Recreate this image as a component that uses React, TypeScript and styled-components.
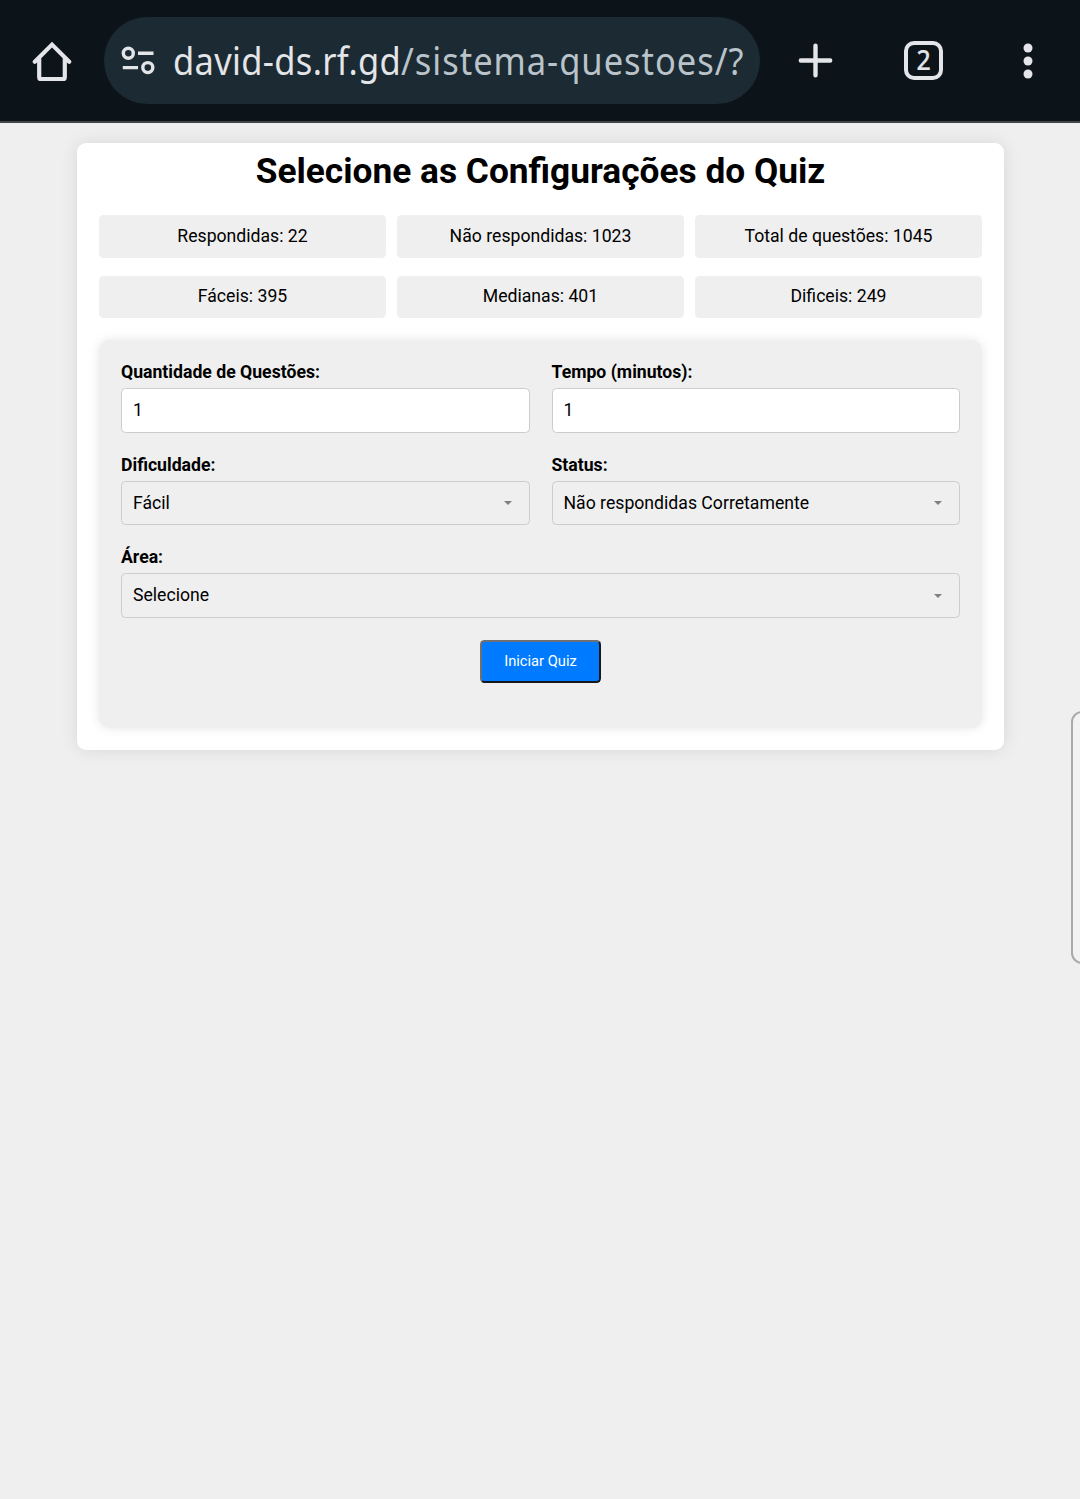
import React from "react";
import styled, { createGlobalStyle } from "styled-components";

const GlobalStyle = createGlobalStyle`
  * { box-sizing: border-box; }
  body {
    margin: 0;
    background: #efefef;
    color: #000;
    font: 17.65px/20.5px Roboto, sans-serif;
  }
`;

const Page = styled.div`
  position: relative;
  min-height: 1499px;
  overflow: hidden;
`;

const BrowserBar = styled.header`
  display: flex;
  align-items: center;
  height: 123px;
  padding: 0 32px 2px;
  background: #0c141a;
  box-shadow: inset 0 -2px #42474c;
`;

const HomeIcon = styled.svg`
  width: 40px;
  height: 40px;
  margin-right: 32px;
  flex: none;
`;

const AddressBar = styled.div`
  display: flex;
  align-items: center;
  width: 656px;
  height: 87px;
  padding-left: 17px;
  border-radius: 44px;
  background: #1b2a33;
`;

const SiteIcon = styled.svg`
  width: 34px;
  height: 30px;
  margin-right: 18px;
  flex: none;
`;

const Url = styled.div`
  width: 576px;
  padding-top: 1px;
  font: 37.5px/54px "Noto Sans", sans-serif;
  white-space: nowrap;
  color: #b9c3c9;
  letter-spacing: 1.05px;
  transform: scaleX(0.92);
  transform-origin: left center;
`;

const Host = styled.span`
  color: #e3e5e8;
  letter-spacing: 0.36px;
`;

const PlusIcon = styled.svg`
  width: 35px;
  height: 35px;
  margin-left: 38px;
  flex: none;
`;

const TabCount = styled.div`
  display: flex;
  align-items: center;
  justify-content: center;
  width: 39px;
  height: 39px;
  margin: 0 1px 0 71.3px;
  flex: none;
  border: 4.5px solid #e3e5e8;
  border-radius: 10px;
  color: #e3e5e8;
  font: 500 27px/30px "Noto Sans", sans-serif;
`;

const TabDigit = styled.span`
  padding-bottom: 1.5px;
  transform: scaleX(0.92);
  -webkit-text-stroke: 0.2px #e3e5e8;
`;

const MenuIcon = styled.svg`
  width: 10px;
  height: 36px;
  margin-left: 78.7px;
  flex: none;
`;

const Card = styled.main`
  width: 927px;
  height: 607px;
  margin: 20px 0 0 77px;
  padding: 8px 22px 22px;
  border-radius: 9px;
  background: #fff;
  box-shadow: 0 0 17px rgba(0, 0, 0, 0.1);
`;

const Title = styled.h1`
  margin: 0 0 23px;
  text-align: center;
  font-size: 35.28px;
  font-weight: 700;
  line-height: 41px;
`;

const Stats = styled.section`
  display: grid;
  grid-template-columns: repeat(3, 1fr);
  gap: 18px 11px;
  margin-bottom: 22px;
`;

const Stat = styled.div`
  height: 42.5px;
  padding: 10.8px 11px;
  border-radius: 4.5px;
  background: #efefef;
  text-align: center;
`;

const Form = styled.form`
  display: grid;
  grid-template-columns: 1fr 1fr;
  align-content: start;
  gap: 22px;
  height: 388px;
  padding: 22px;
  border-radius: 11px;
  background: #efefef;
  box-shadow: 0 0 11px rgba(0, 0, 0, 0.1);
`;

const Field = styled.div<{ $wide?: boolean }>`
  display: flex;
  flex-direction: column;
  gap: 5.5px;
  grid-column: ${(p) => (p.$wide ? "1 / -1" : "auto")};
`;

const Label = styled.label`
  height: 20.5px;
  line-height: 20px;
  font-weight: 700;
`;

const Input = styled.input`
  width: 100%;
  height: 44.5px;
  padding: 0 11px;
  border: 1px solid #ccc;
  border-radius: 4.5px;
  background: #fff;
  color: #000;
  font: 17.65px Roboto, sans-serif;
  outline: none;
`;

const Select = styled.div`
  display: flex;
  align-items: center;
  justify-content: space-between;
  height: 44.5px;
  padding: 0 17px 0 11px;
  border: 1px solid #ccc;
  border-radius: 4.5px;
`;

const Caret = styled.span`
  border: 4.5px solid transparent;
  border-top-color: #808080;
  border-bottom: 0;
  margin-top: 1px;
`;

const StartButton = styled.button`
  grid-column: 1 / -1;
  justify-self: center;
  width: 121px;
  height: 43px;
  padding: 0 0 1px;
  border: 2px solid;
  border-color: #6f7073 #15181c #15181c #6f7073;
  border-radius: 4.5px;
  background: #007bff;
  color: #fff;
  font: 14.69px Roboto, sans-serif;
`;

const EdgePanel = styled.aside`
  position: absolute;
  left: 1070.5px;
  top: 711px;
  width: 24px;
  height: 253px;
  border: 2px solid #aaa;
  border-radius: 11px;
  background: #f2f2f2;
`;

const stats = [
  "Respondidas: 22",
  "Não respondidas: 1023",
  "Total de questões: 1045",
  "Fáceis: 395",
  "Medianas: 401",
  "Dificeis: 249",
];

const ink = "#e3e5e8";

export default function App() {
  return (
    <Page>
      <GlobalStyle />
      <BrowserBar>
        <HomeIcon viewBox="0 0 40 40" fill="none" stroke={ink} strokeWidth="4.2" strokeLinecap="round" strokeLinejoin="round">
          <path d="M2.8 20.7 20 3.6l17.2 17.1" strokeLinejoin="miter" />
          <path d="M7.2 18v18.2q0 2 2 2h21.6q2 0 2-2V18" />
        </HomeIcon>
        <AddressBar>
          <SiteIcon viewBox="0 0 34 30" fill="none" stroke={ink} strokeWidth="3.4">
            <circle cx="7.3" cy="7.2" r="5" />
            <path d="M17 7.2h15.5M1.8 21.6H17" />
            <circle cx="26.8" cy="21.6" r="5" />
          </SiteIcon>
          <Url>
            <Host>david-ds.rf.gd</Host>/sistema-questoes/?
          </Url>
        </AddressBar>
        <PlusIcon viewBox="0 0 35 35" stroke={ink} strokeWidth="4.4" strokeLinecap="round">
          <path d="M17.5 2.8v29.4M2.8 17.5h29.4" />
        </PlusIcon>
        <TabCount>
          <TabDigit>2</TabDigit>
        </TabCount>
        <MenuIcon viewBox="0 0 10 36" fill={ink}>
          <circle cx="5" cy="5" r="4.5" />
          <circle cx="5" cy="18" r="4.5" />
          <circle cx="5" cy="31" r="4.5" />
        </MenuIcon>
      </BrowserBar>
      <Card>
        <Title>Selecione as Configurações do Quiz</Title>
        <Stats>
          {stats.map((s) => (
            <Stat key={s}>{s}</Stat>
          ))}
        </Stats>
        <Form>
          <Field>
            <Label>Quantidade de Questões:</Label>
            <Input defaultValue="1" />
          </Field>
          <Field>
            <Label>Tempo (minutos):</Label>
            <Input defaultValue="1" />
          </Field>
          <Field>
            <Label>Dificuldade:</Label>
            <Select>Fácil<Caret /></Select>
          </Field>
          <Field>
            <Label>Status:</Label>
            <Select>Não respondidas Corretamente<Caret /></Select>
          </Field>
          <Field $wide>
            <Label>Área:</Label>
            <Select>Selecione<Caret /></Select>
          </Field>
          <StartButton type="button">Iniciar Quiz</StartButton>
        </Form>
      </Card>
      <EdgePanel />
    </Page>
  );
}
